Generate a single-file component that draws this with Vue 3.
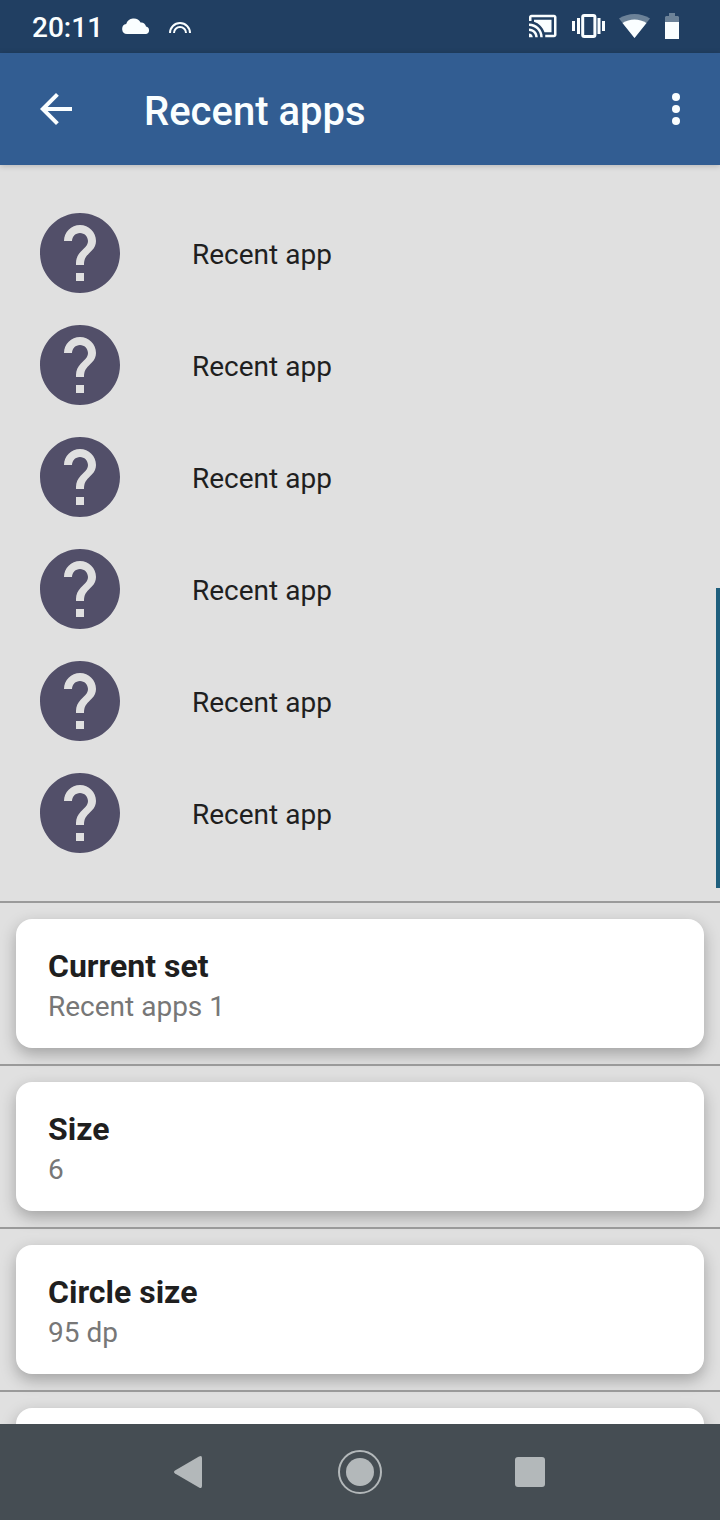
<script setup>
const recentApps = Array.from({ length: 6 }, (_, i) => ({ id: i, label: 'Recent app' }))

const settings = [
  { title: 'Current set', value: 'Recent apps 1' },
  { title: 'Size', value: '6' },
  { title: 'Circle size', value: '95 dp' },
  { title: '', value: '' },
]
</script>

<template>
  <div class="screen">
    <div class="status">
      <span class="clock">20:11</span>
      <svg class="cloud" width="28" height="18" viewBox="0 0 28 18" fill="currentColor">
        <path d="M5 17a5 5 0 0 1-.8-9.9A7.8 7.8 0 0 1 18.6 5.6 4.6 4.6 0 0 1 24 9.6 3.8 3.8 0 0 1 24.2 17z" />
      </svg>
      <svg class="rainbow" width="22" height="18" viewBox="0 0 22 18" fill="none" stroke="currentColor" stroke-width="2">
        <path d="M1 16a10 10 0 0 1 20 0M5 16a6 6 0 0 1 12 0" />
      </svg>
      <div class="indicators">
        <svg width="30" height="30" viewBox="-0.6 0 24 24" fill="currentColor">
          <path d="M1 18v3h3c0-1.66-1.34-3-3-3zm0-4v2c2.76 0 5 2.24 5 5h2c0-3.87-3.13-7-7-7zm18-7H5v1.63c3.96 1.28 7.09 4.41 8.37 8.37H19V7zM1 10v2c4.97 0 9 4.03 9 9h2c0-6.08-4.93-11-11-11zm20-7H3c-1.1 0-2 .9-2 2v3h2V5h18v14h-7v2h7c1.1 0 2-.9 2-2V5c0-1.1-.9-2-2-2z" />
        </svg>
        <svg width="34" height="26" viewBox="0 0 34 26" fill="currentColor">
          <rect x="11.7" y="2.5" width="12.2" height="21" rx="1.5" fill="none" stroke="currentColor" stroke-width="3" />
          <path d="M1 8h3v10H1zM6 5h3v16H6zM26.5 5h3v16h-3zM31 8h3v10h-3z" />
        </svg>
        <svg width="32" height="26" viewBox="0 0 32 26" fill="currentColor">
          <path opacity=".35" d="M0 5.5Q7 1 15.5 1T31 5.5L15.5 25z" />
          <path d="M3.500 10Q9 6.500 15.500 6.500T27.500 10L15.500 25z" />
        </svg>
        <svg width="14" height="26" viewBox="0 0 14 26" fill="currentColor">
          <path opacity=".35" d="M4 0h6v3h3l1 1v5H0V4l1-1h3z" />
          <path d="M0 9h14v17H0z" />
        </svg>
      </div>
    </div>

    <header class="appbar">
      <button class="icon-button" type="button" aria-label="Back">
        <svg width="48" height="48" viewBox="0 0 24 24" fill="currentColor">
          <path d="M20 11H7.83l5.59-5.59L12 4l-8 8 8 8 1.41-1.41L7.83 13H20v-2z" />
        </svg>
      </button>
      <h1>Recent apps</h1>
      <button class="icon-button" type="button" aria-label="More options">
        <svg width="48" height="48" viewBox="0 0 24 24" fill="currentColor">
          <circle cx="12" cy="6" r="2" /><circle cx="12" cy="12" r="2" /><circle cx="12" cy="18" r="2" />
        </svg>
      </button>
    </header>

    <main class="content">
      <ul class="apps">
        <li v-for="app in recentApps" :key="app.id">
          <button class="app" type="button">
            <svg width="96" height="96" viewBox="0 0 24 24" fill="currentColor">
              <path d="M12 2C6.48 2 2 6.48 2 12s4.48 10 10 10 10-4.48 10-10S17.52 2 12 2zm1 17h-2v-2h2v2zm2.07-7.75l-.9.92C13.45 12.9 13 13.5 13 15h-2v-.5c0-1.1.45-2.1 1.17-2.83l1.24-1.26c.37-.36.59-.86.59-1.41 0-1.1-.9-2-2-2s-2 .9-2 2H8c0-2.21 1.79-4 4-4s4 1.79 4 4c0 .88-.36 1.68-.93 2.25z" />
            </svg>
            <span class="app-label">{{ app.label }}</span>
          </button>
        </li>
      </ul>
      <section v-for="(item, i) in settings" :key="i" class="setting">
        <button class="card" type="button">
          <span class="card-title">{{ item.title }}</span>
          <span class="card-value">{{ item.value }}</span>
        </button>
      </section>
      <div class="scroll-thumb"></div>
    </main>

    <nav class="navbar">
      <button type="button" aria-label="Back">
        <svg width="44" height="44" viewBox="0 0 44 44" fill="currentColor">
          <path d="M9 20.500 33 6.500Q36 5 36 8V36Q36 39 33 37.500L9 23.500Q7 22 9 20.500z" />
        </svg>
      </button>
      <button type="button" aria-label="Home">
        <svg width="44" height="44" viewBox="0 0 44 44" fill="currentColor">
          <circle cx="22" cy="22" r="21" fill="none" stroke="currentColor" stroke-width="2" />
          <circle cx="22" cy="22" r="14" />
        </svg>
      </button>
      <button type="button" aria-label="Overview">
        <svg width="44" height="44" viewBox="0 0 44 44" fill="currentColor">
          <rect x="5" y="7" width="30" height="30" rx="3" />
        </svg>
      </button>
    </nav>
  </div>
</template>

<style>
body {
  margin: 0;
}
</style>

<style scoped>
.screen {
  display: flex;
  flex-direction: column;
  height: 100vh;
  overflow: hidden;
  background: #e0e0e0;
  color: #1f1f1f;
  font-family: Roboto, "Liberation Sans", sans-serif;
}

svg {
  display: block;
  flex: none;
}

button {
  margin: 0;
  padding: 0;
  border: 0;
  background: none;
  color: inherit;
  font: inherit;
  text-align: left;
  cursor: pointer;
}

.status {
  display: flex;
  flex: none;
  box-sizing: border-box;
  align-items: center;
  height: 53px;
  padding: 0 41px 1px 32px;
  background: #213f62;
  color: #fafeff;
}

.clock {
  padding-top: 3px;
  font-size: 28px;
  font-weight: 500;
  line-height: 32px;
}

.cloud,
.rainbow {
  margin-left: 19px;
}

.indicators {
  display: flex;
  align-items: center;
  gap: 14px;
  margin-left: auto;
}

.appbar {
  position: relative;
  z-index: 1;
  display: flex;
  flex: none;
  align-items: center;
  height: 112px;
  padding: 0 20px 0 32px;
  background: #325d92;
  color: #fafeff;
  box-shadow: 0 1px 6px rgba(0, 0, 0, 0.2);
}

.appbar h1 {
  flex: 1;
  margin: 0;
  padding: 6px 0 0 64px;
  font-size: 40px;
  font-weight: 500;
  line-height: 48px;
}

.content {
  position: relative;
  flex: 1;
  min-height: 0;
  overflow: hidden;
}

.apps {
  margin: 0;
  padding: 32px 0;
  list-style: none;
}

.app {
  display: flex;
  align-items: center;
  gap: 64px;
  width: 100%;
  height: 112px;
  padding: 0 32px;
}

.app svg {
  color: #524f69;
}

.app-label {
  padding-top: 4px;
  font-size: 28px;
  line-height: 40px;
}

.setting {
  padding: 16px;
  border-top: 2px solid #9a9a9a;
}

.card {
  display: block;
  width: 100%;
  min-height: 129px;
  padding: 27px 32px 20px;
  border-radius: 16px;
  background: #fff;
  box-shadow: 0 6px 16px rgba(0, 0, 0, 0.28);
}

.card-title,
.card-value {
  display: block;
}

.card-title {
  min-height: 40px;
  font-size: 32px;
  font-weight: 700;
  line-height: 40px;
}

.card-value {
  min-height: 42px;
  color: #777;
  font-size: 28px;
  line-height: 42px;
}

.scroll-thumb {
  position: absolute;
  top: 423px;
  right: 0;
  width: 4px;
  height: 300px;
  background: #1f5f7d;
}

.navbar {
  display: flex;
  flex: none;
  align-items: center;
  justify-content: center;
  gap: 128px;
  height: 96px;
  background: #454d53;
  color: #b3b8ba;
}
</style>
